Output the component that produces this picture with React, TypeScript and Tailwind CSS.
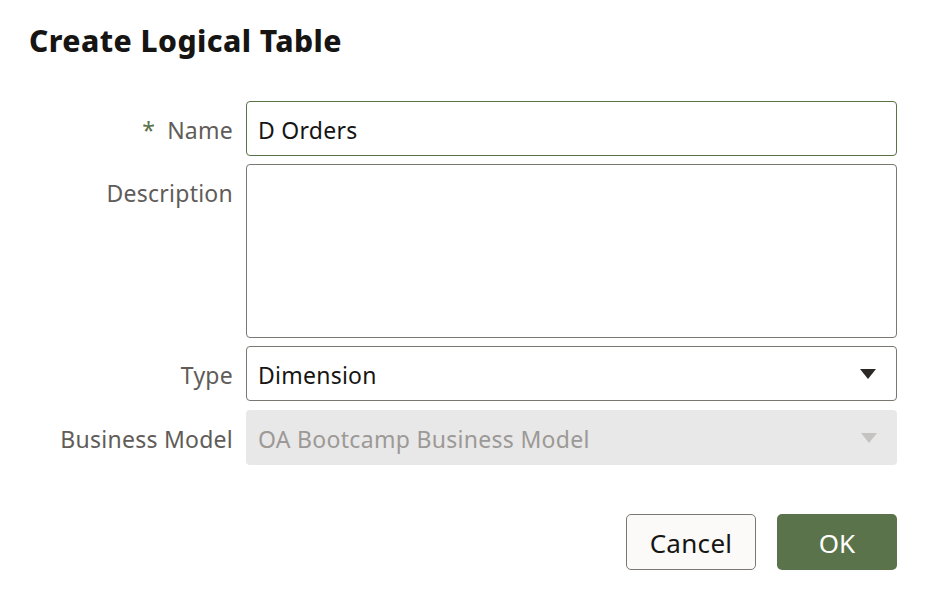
const font = { fontFamily: '"Noto Sans", "Open Sans", sans-serif' };

const Caret = ({ disabled }: { disabled?: boolean }) => (
  <svg width="18" height="12" viewBox="0 0 18 12" className="shrink-0">
    <path d="M1 1h16L9 11z" fill={disabled ? "#c4c3c1" : "#2b2826"} />
  </svg>
);

const Label = ({ children, required }: { children: React.ReactNode; required?: boolean }) => (
  <div className="h-[55px] pt-[4px] flex items-center justify-end text-[23px] tracking-[0.25px] text-[#5f5c59] whitespace-nowrap">
    {required && <span className="text-[#5b7148] mr-[12px]">*</span>}
    {children}
  </div>
);

export default function App() {
  return (
    <div className="w-[936px] h-[604px] bg-white text-[#161513]" style={font}>
      <div className="pl-[29px] pr-[39px] pt-[20px]">
        <h1 className="text-[30px] leading-[42px] font-extrabold tracking-[0.45px] text-[#161513]">
          Create Logical Table
        </h1>

        <div className="mt-[39px] grid grid-cols-[204px_1fr] gap-x-[13px] gap-y-2">
          <Label required>Name</Label>
          <div className="h-[55px] pt-[4px] rounded-[4px] border border-[#5b7148] bg-white flex items-center px-[11px] text-[23px] tracking-[0.25px]">
            D Orders
          </div>

          <Label>Description</Label>
          <div className="h-[174px] rounded-[4px] border border-[#7b7772] bg-white" />

          <Label>Type</Label>
          <div className="h-[55px] rounded-[4px] border border-[#7b7772] bg-white flex items-center justify-between pl-[11px] pr-[19px] text-[23px] tracking-[0.25px]">
            <span className="pt-[4px]">Dimension</span>
            <Caret />
          </div>

          <div className="mt-px">
            <Label>Business Model</Label>
          </div>
          <div className="mt-px h-[55px] rounded-[4px] bg-[#e8e8e8] flex items-center justify-between pl-[12px] pr-[19px] text-[23px] tracking-[0.3px] text-[#9c9996]">
            <span className="pt-[4px]">OA Bootcamp Business Model</span>
            <Caret disabled />
          </div>
        </div>

        <div className="mt-[49px] flex justify-end gap-[21px]">
          <button className="w-[130px] h-[56px] pt-[2px] rounded-[5px] border border-[#7b7772] bg-[#fbfaf8] text-[26px] tracking-[0.3px] text-[#161513]">
            Cancel
          </button>
          <button className="w-[120px] h-[56px] pt-[2px] rounded-[5px] bg-[#5b734a] text-[26px] text-white">
            OK
          </button>
        </div>
      </div>
    </div>
  );
}
